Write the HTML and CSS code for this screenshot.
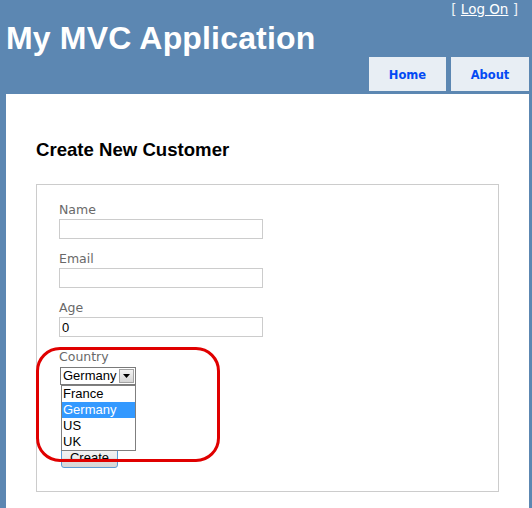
FILE: index.html
```html
<!DOCTYPE html>
<html>
<head>
<meta charset="utf-8">
<title>Create New Customer</title>
<link rel="stylesheet" href="styles.css">
</head>
<body>
<div class="page">
  <header class="header">
    <div class="login">[ <a class="login-link" href="#">Log On</a> ]</div>
    <h1 class="title">My MVC Application</h1>
    <nav class="menu">
      <a class="tab tab-home" href="#">Home</a>
      <a class="tab tab-about" href="#">About</a>
    </nav>
  </header>
  <main class="main">
    <h2 class="heading">Create New Customer</h2>
    <div class="fs">
      <div class="field">
        <label class="lbl">Name</label>
        <input class="txt" type="text" value="">
      </div>
      <div class="field">
        <label class="lbl">Email</label>
        <input class="txt" type="text" value="">
      </div>
      <div class="field">
        <label class="lbl">Age</label>
        <input class="txt" type="text" value="0">
      </div>
      <div class="field field-country">
        <label class="lbl">Country</label>
        <div class="select">
          <span class="select-val">Germany</span>
          <span class="select-btn"><svg class="arrow" width="7" height="4" viewBox="0 0 7 4"><path d="M0 0H7L3.5 4Z" fill="#000"/></svg></span>
        </div>
        <ul class="dropdown">
          <li class="opt">France</li>
          <li class="opt opt-sel">Germany</li>
          <li class="opt">US</li>
          <li class="opt">UK</li>
        </ul>
      </div>
      <div class="actions">
        <button class="btn" type="button">Create</button>
      </div>
      <div class="annot"></div>
    </div>
  </main>
</div>
</body>
</html>
```
FILE: styles.css
```css
html, body {
  margin: 0;
  padding: 0;
  overflow: hidden;
}
body {
  background: #5c87b2;
  font-family: "DejaVu Sans", Verdana, sans-serif;
  font-size: 12px;
  color: #696969;
}
.page {
  padding: 0 3px 0 6px;
}
.header {
  display: flex;
  flex-direction: column;
}
.login {
  height: 19px;
  line-height: 19px;
  text-align: right;
  padding-right: 11px;
  font-size: 13.5px;
  color: #eef2f6;
}
.login-link {
  color: #ffffff;
  text-decoration: underline;
}
.title {
  margin: 0;
  height: 38px;
  line-height: 38px;
  font-family: "Liberation Sans", Arial, sans-serif;
  font-size: 32px;
  font-weight: bold;
  letter-spacing: 0.17px;
  color: #ffffff;
}
.menu {
  display: flex;
  justify-content: flex-end;
  gap: 5px;
  height: 34px;
  margin-bottom: 3px;
}
.tab {
  display: flex;
  align-items: center;
  justify-content: center;
  box-sizing: border-box;
  padding-top: 1px;
  background: #e8eef4;
  color: #034af3;
  font-weight: bold;
  font-size: 11.5px;
  text-decoration: none;
}
.tab-home { width: 77px; }
.tab-about { width: 78px; }
.main {
  background: #ffffff;
  padding: 30px 30px 40px;
}
.heading {
  margin: 15px 0 23px;
  line-height: 22px;
  font-family: "Liberation Sans", Arial, sans-serif;
  font-size: 18.6px;
  font-weight: bold;
  color: #000000;
}
.fs {
  position: relative;
  border: 1px solid #cccccc;
  padding: 16px 22px 23px;
}
.field {
  display: flex;
  flex-direction: column;
  align-items: flex-start;
  margin-bottom: 11px;
}
.lbl {
  display: block;
  box-sizing: border-box;
  height: 17px;
  padding-top: 1px;
  line-height: 16px;
  font-size: 12.5px;
  color: #696969;
}
.txt {
  box-sizing: border-box;
  width: 204px;
  height: 20px;
  margin: 1px 0 0;
  padding: 0 2px;
  border: 1px solid #cccccc;
  font-family: "Liberation Sans", Arial, sans-serif;
  font-size: 13px;
  color: #000000;
  outline: none;
}
.field-country {
  position: relative;
  margin-bottom: 0;
}
.select {
  box-sizing: border-box;
  display: flex;
  align-items: center;
  justify-content: space-between;
  width: 76px;
  height: 18px;
  margin: 2px 0 0 1px;
  padding: 1px;
  border: 1px solid #7a7a7a;
  background: #ffffff;
  font-family: "Liberation Sans", Arial, sans-serif;
  font-size: 13px;
  color: #000000;
}
.select-val {
  padding-left: 1px;
  line-height: 14px;
}
.select-btn {
  box-sizing: border-box;
  display: flex;
  align-items: center;
  justify-content: center;
  width: 15px;
  height: 14px;
  border: 1px solid #a3a3a3;
  background: linear-gradient(#f4f4f4, #d6d6d6);
}
.dropdown {
  position: absolute;
  left: 2px;
  top: 37px;
  z-index: 2;
  box-sizing: border-box;
  width: 75px;
  margin: 0;
  padding: 0;
  list-style: none;
  border: 1px solid #7f7f7f;
  background: #ffffff;
  font-family: "Liberation Sans", Arial, sans-serif;
  font-size: 13px;
  color: #000000;
}
.opt {
  height: 16px;
  line-height: 16px;
  padding-left: 1px;
}
.opt-sel {
  background: #3399ff;
  color: #ffffff;
}
.actions {
  margin-top: 62px;
}
.btn {
  display: block;
  box-sizing: border-box;
  width: 57px;
  height: 21px;
  margin-left: 2px;
  padding: 0;
  border: 1px solid #5b9bd5;
  border-radius: 3px;
  background: linear-gradient(#f4f4f4 0%, #ececec 50%, #e0e0e0 51%, #d6d6d6 100%);
  font-family: "Liberation Sans", Arial, sans-serif;
  font-size: 13px;
  color: #000000;
}
.annot {
  position: absolute;
  left: -1px;
  top: 162px;
  z-index: 3;
  box-sizing: border-box;
  width: 184px;
  height: 115px;
  border: 3px solid #e00000;
  border-radius: 24px;
  pointer-events: none;
}
```
